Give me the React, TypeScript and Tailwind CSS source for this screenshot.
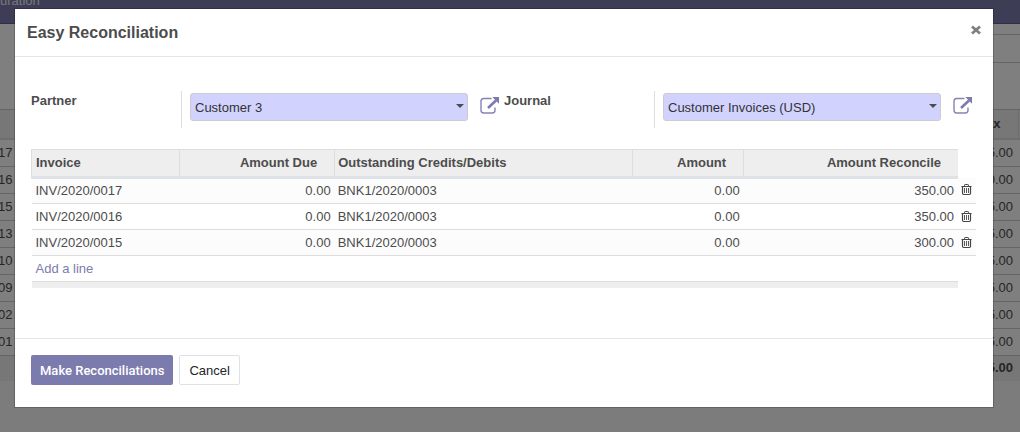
import { useState } from "react";

type Line = { invoice: string; due: string; credit: string; amount: string; reconcile: string };

const initialLines: Line[] = [
  { invoice: "INV/2020/0017", due: "0.00", credit: "BNK1/2020/0003", amount: "0.00", reconcile: "350.00" },
  { invoice: "INV/2020/0016", due: "0.00", credit: "BNK1/2020/0003", amount: "0.00", reconcile: "350.00" },
  { invoice: "INV/2020/0015", due: "0.00", credit: "BNK1/2020/0003", amount: "0.00", reconcile: "300.00" },
];

const pageRows: [string, string][] = [
  ["17", "5.00"],
  ["16", "0.00"],
  ["15", "5.00"],
  ["13", "5.00"],
  ["10", "5.00"],
  ["09", "5.00"],
  ["02", "5.00"],
  ["01", "5.00"],
];

function ExternalLinkIcon() {
  return (
    <svg width="20" height="18" viewBox="0 0 20 18" fill="none" aria-hidden="true">
      <path d="M11.5 1.5H3.7Q1 1.5 1 4.2V13.3Q1 16 3.7 16H12.3Q15 16 15 13.3V10.5" stroke="#8583b5" strokeWidth="1.4" />
      <path d="M8 11L16 3.5" stroke="#7c7bad" strokeWidth="2.6" />
      <path d="M12.3 0H19V6.7Z" fill="#7c7bad" />
    </svg>
  );
}

function TrashIcon() {
  return (
    <svg width="11" height="12" viewBox="0 0 11 12" fill="none" stroke="#444" aria-hidden="true">
      <path d="M0.5 2.5H10.5M3.5 2.5V1.2Q3.5 0.5 4.2 0.5H6.8Q7.5 0.5 7.5 1.2V2.5" />
      <path d="M1.5 2.5V9.3Q1.5 10.5 2.7 10.5H8.3Q9.5 10.5 9.5 9.3V2.5" strokeWidth="1.2" />
      <path d="M3.5 4V9M5.5 4V9M7.5 4V9" strokeWidth="0.9" />
    </svg>
  );
}

function Field({ id, label, value }: { id: string; label: string; value: string }) {
  return (
    <div className="flex min-w-0 flex-1 items-start">
      <label htmlFor={id} className="w-[150px] shrink-0 pt-px font-bold leading-[18px]">
        {label}
      </label>
      <div className="flex h-[37px] min-w-0 flex-1 items-start border-l border-[#dddddd] pl-2 pt-0.5">
        <div className="relative min-w-0 flex-1">
          <select
            id={id}
            defaultValue={value}
            className="h-7 w-full appearance-none rounded-[3px] border border-[#cccccc] bg-[#d2d2ff] pl-1 pr-5 pt-0.5 text-[#333333]"
          >
            <option>{value}</option>
          </select>
          <svg className="pointer-events-none absolute right-1 top-[11px]" width="8" height="4" viewBox="0 0 8 4" aria-hidden="true">
            <path d="M0 0H8L4 4Z" fill="#4c4c4c" />
          </svg>
        </div>
        <button type="button" aria-label={`Open ${label}`} className="ml-3 mr-1 mt-1 h-[18px] w-5 shrink-0">
          <ExternalLinkIcon />
        </button>
      </div>
    </div>
  );
}

function BackgroundPage() {
  return (
    <div className="min-h-screen overflow-hidden bg-[#f9f9f9] text-[#4c4c4c]">
      <div className="h-6 overflow-hidden border-b border-[#5f5e97] bg-[#7c7bad] text-[#eeeeee]">
        <div className="-mt-2 leading-[18px]">uration</div>
      </div>
      <div className="flex h-[86px] justify-end border-b border-[#cacaca] bg-white">
        <div className="mt-2.5 h-[29px] w-1/2 border-y border-[#cccccc]" />
      </div>
      <table className="w-full border-collapse bg-white">
        <thead>
          <tr className="h-[29px] border-b-2 border-[#dddddd] bg-[#eeeeee] font-bold">
            <th />
            <th className="border-r border-[#dddddd] pr-[17px] text-right">Tax</th>
            <th className="w-[2px]" />
          </tr>
        </thead>
        <tbody>
          {pageRows.map(([number, total]) => (
            <tr key={number} className="h-[27px] border-b border-[#cccccc]">
              <td className="-indent-0.5">{number}</td>
              <td colSpan={2} className="pr-[7px] text-right">{total}</td>
            </tr>
          ))}
          <tr className="h-[26px] bg-[#eeeeee] font-bold">
            <td />
            <td colSpan={2} className="pr-[7px] text-right">5.00</td>
          </tr>
        </tbody>
      </table>
    </div>
  );
}

export default function App() {
  const [lines, setLines] = useState(initialLines);
  const addLine = () =>
    setLines([...lines, { invoice: "", due: "0.00", credit: "", amount: "0.00", reconcile: "0.00" }]);

  return (
    <div className="relative font-['Liberation_Sans',Arial,sans-serif] text-[13px] leading-[18px]">
      <BackgroundPage />
      <div className="absolute inset-0 bg-black/50 pl-3.5 pr-[26px] pt-2">
        <div role="dialog" aria-labelledby="dialog-title" className="border border-black/20 bg-white bg-clip-padding text-[#4c4c4c]">
          <header className="flex h-12 items-start justify-between border-b border-[#e5e5e5] px-3 pt-3">
            <h1 id="dialog-title" className="text-base font-bold leading-6">Easy Reconciliation</h1>
            <button type="button" aria-label="Close" className="flex h-[18px] w-2.5 items-center">
              <svg width="10" height="10" viewBox="0 0 10 10" aria-hidden="true">
                <path d="M1 1.5L9 8.5M9 1.5L1 8.5" stroke="#7f7f7f" strokeWidth="2.8" />
              </svg>
            </button>
          </header>

          <main className="h-[281px] px-4 pt-[34px]">
            <div className="flex">
              <Field id="partner" label="Partner" value="Customer 3" />
              <Field id="journal" label="Journal" value="Customer Invoices (USD)" />
            </div>

            <table className="mt-[21px] w-[calc(100%-1px)] table-fixed border-collapse">
              <colgroup>
                <col className="w-[15.7%]" />
                <col className="w-[16.4%]" />
                <col className="w-[31.5%]" />
                <col className="w-[11.8%]" />
                <col />
                <col className="w-[18px]" />
              </colgroup>
              <thead>
                <tr className="h-7">
                  <th className="border border-b-[3px] border-[#dddddd] border-b-[#dee2e6] bg-[#eeeeee] px-1 text-left">Invoice</th>
                  <th className="border border-b-[3px] border-[#dddddd] border-b-[#dee2e6] bg-[#eeeeee] pl-1 pr-[17px] text-right">Amount Due</th>
                  <th className="border border-b-[3px] border-[#dddddd] border-b-[#dee2e6] bg-[#eeeeee] pl-[3px] pr-1 text-left">Outstanding Credits/Debits</th>
                  <th className="border border-b-[3px] border-[#dddddd] border-b-[#dee2e6] bg-[#eeeeee] pl-1 pr-[17px] text-right">Amount</th>
                  <th className="border border-b-[3px] border-r-0 border-[#dddddd] border-b-[#dee2e6] bg-[#eeeeee] pl-1 pr-[17px] text-right">Amount Reconcile</th>
                  <th />
                </tr>
              </thead>
              <tbody>
                {lines.map((line, index) => (
                  <tr key={index} className="h-[26px] border-b border-[#dddddd] odd:bg-[#fcfcfc]">
                    <td className="px-1">{line.invoice}</td>
                    <td className="px-1 text-right">{line.due}</td>
                    <td className="pl-[3px] pr-1">{line.credit}</td>
                    <td className="px-1 text-right">{line.amount}</td>
                    <td className="px-1 text-right">{line.reconcile}</td>
                    <td className="pl-[3px]">
                      <button
                        type="button"
                        aria-label="Delete line"
                        className="block h-3 w-[11px]"
                        onClick={() => setLines(lines.filter((_, i) => i !== index))}
                      >
                        <TrashIcon />
                      </button>
                    </td>
                  </tr>
                ))}
                <tr className="h-[26px]">
                  <td colSpan={5} className="border-b border-[#dddddd] px-1">
                    <button type="button" className="text-[#7c7bad]" onClick={addLine}>Add a line</button>
                  </td>
                </tr>
              </tbody>
              <tfoot>
                <tr className="h-1.5">
                  <td colSpan={5} className="bg-[#eeeeee]" />
                </tr>
              </tfoot>
            </table>
          </main>

          <footer className="flex h-[69px] items-start gap-1.5 border-t border-[#e5e5e5] px-4 pt-4">
            <button type="button" className="h-[30px] rounded-[2px] bg-[#7c7bad] px-[9px] pt-px font-['Roboto',sans-serif] font-medium text-white">
              Make Reconciliations
            </button>
            <button type="button" className="h-[30px] rounded-[2px] border border-[#dee2e6] bg-white px-[9px] pt-px text-[#212529]">
              Cancel
            </button>
          </footer>
        </div>
      </div>
    </div>
  );
}
